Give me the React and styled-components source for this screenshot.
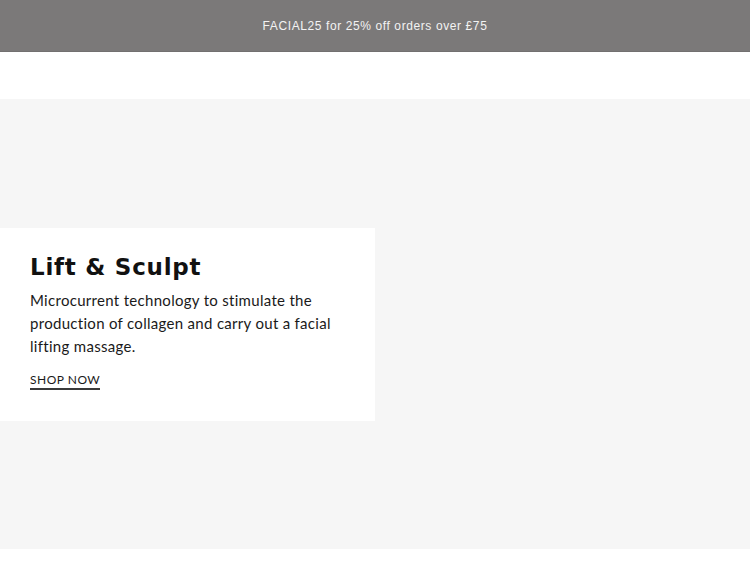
import React from "react";
import styled, { createGlobalStyle } from "styled-components";

const Global = createGlobalStyle`
  html, body { margin: 0; padding: 0; background: #ffffff; }
  * { box-sizing: border-box; }
`;

const Page = styled.div`
  display: flex;
  flex-direction: column;
  width: 750px;
`;

const Announcement = styled.div`
  height: 52px;
  background: #7b7979;
  border-bottom: 1px solid #727070;
  display: flex;
  align-items: center;
  justify-content: center;
  color: #f3f3f3;
  font-family: "Liberation Sans", Arial, sans-serif;
  font-size: 12px;
  letter-spacing: 0.6px;
`;

const Spacer = styled.div`
  height: 47px;
  background: #ffffff;
`;

const Hero = styled.section`
  height: 450px;
  background: #f6f6f6;
  display: flex;
  align-items: center;
`;

const Card = styled.div`
  width: 375px;
  height: 193px;
  background: #ffffff;
  padding: 24px 30px 0 30px;
  display: flex;
  flex-direction: column;
  align-items: flex-start;
`;

const Title = styled.h2`
  margin: 0;
  font-family: "DejaVu Sans", "Liberation Sans", sans-serif;
  font-weight: 700;
  font-size: 23px;
  line-height: 30px;
  letter-spacing: 0.75px;
  color: #111111;
`;

const Body = styled.p`
  margin: 7px 0 0 0;
  font-family: "Lato", sans-serif;
  font-size: 15px;
  line-height: 23px;
  letter-spacing: 0.3px;
  color: #1a1a1a;
`;

const ShopLink = styled.a`
  margin-top: 14px;
  font-family: "Lato", sans-serif;
  font-size: 12px;
  line-height: 16px;
  letter-spacing: 0.5px;
  color: #1a1a1a;
  text-decoration: none;
  border-bottom: 2px solid #3a3a3a;
`;

export default function App() {
  return (
    <Page>
      <Global />
      <Announcement>FACIAL25 for 25% off orders over £75</Announcement>
      <Spacer />
      <Hero>
        <Card>
          <Title>Lift &amp; Sculpt</Title>
          <Body>
            Microcurrent technology to stimulate the production of collagen and
            carry out a facial lifting massage.
          </Body>
          <ShopLink href="#">SHOP NOW</ShopLink>
        </Card>
      </Hero>
    </Page>
  );
}
